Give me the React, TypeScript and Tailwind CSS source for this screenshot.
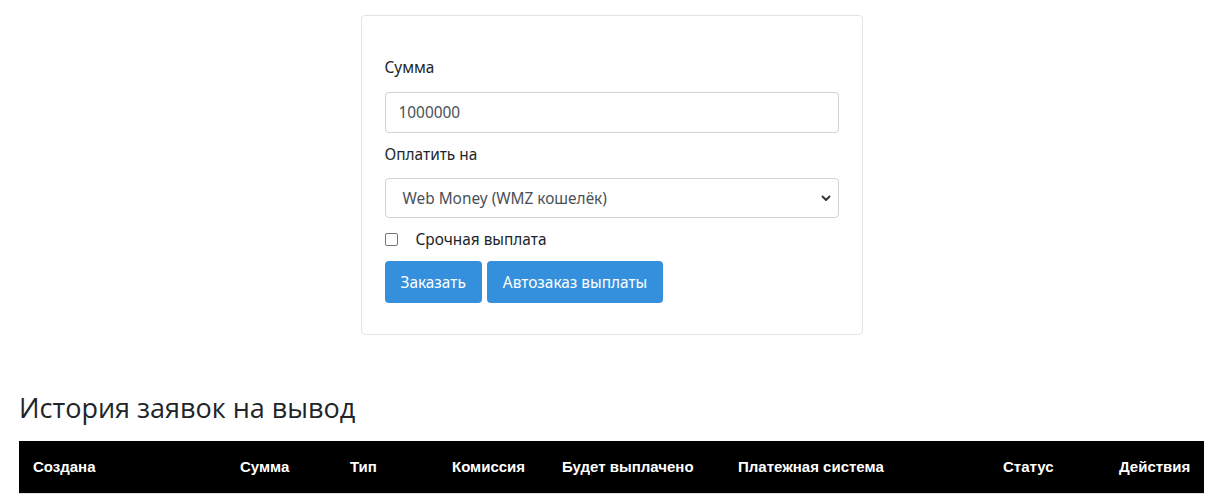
import React from "react";

const cols: { label: string; w: string }[] = [
  { label: "Создана", w: "w-[207px]" },
  { label: "Сумма", w: "w-[110px]" },
  { label: "Тип", w: "w-[102px]" },
  { label: "Комиссия", w: "w-[110px]" },
  { label: "Будет выплачено", w: "w-[176px]" },
  { label: "Платежная система", w: "w-[265px]" },
  { label: "Статус", w: "w-[116px]" },
  { label: "Действия", w: "w-[99px]" },
];

export default function App() {
  return (
    <div className="min-h-[498px] bg-white text-[#212529] font-['Noto_Sans',sans-serif] text-[15.4px] leading-[23px]">
      <div className="pl-[19px] pr-[9px] pt-[15px]">
        <div className="mx-auto w-[502px] rounded-[4px] border border-[#e2e3e5] px-[23px] pt-[40px] pb-[31px]">
          <label className="block">Сумма</label>
          <div className="mt-[13px] h-[41px] rounded-[4px] border border-[#ced4da] px-[13px] flex items-center text-[#495057]">
            1000000
          </div>
          <label className="block mt-[10px]">Оплатить на</label>
          <div className="relative mt-[12px] h-[40px] rounded-[4px] border border-[#ced4da] pl-[17px] flex items-center text-[#495057]">
            Web Money (WMZ кошелёк)
            <svg
              className="absolute right-[6px] top-1/2 -translate-y-1/2"
              width="12"
              height="12"
              viewBox="0 0 12 12"
            >
              <path d="M2.5 4.5 L6 8 L9.5 4.5" fill="none" stroke="#343a40" strokeWidth="2" strokeLinecap="round" strokeLinejoin="round" />
            </svg>
          </div>
          <div className="mt-[10px] flex items-center h-[23px]">
            <span className="w-[13px] h-[13px] rounded-[2px] border border-[#767676] bg-white" />
            <span className="ml-[18px]">Срочная выплата</span>
          </div>
          <div className="mt-[10px] flex gap-[5px]">
            <button className="h-[42px] rounded-[4px] bg-[#3490dc] px-[16px] text-white">Заказать</button>
            <button className="h-[42px] rounded-[4px] bg-[#3490dc] px-[16px] text-white">Автозаказ выплаты</button>
          </div>
        </div>

        <h2 className="mt-[56px] font-['Open_Sans',sans-serif] text-[27px] leading-[34px] font-normal text-[#212529]">
          История заявок на вывод
        </h2>

        <table className="mt-[16px] w-full table-fixed border-collapse">
          <thead>
            <tr className="bg-black text-white border-b border-[#dee2e6]">
              {cols.map((c) => (
                <th
                  key={c.label}
                  className={`${c.w} h-[52px] px-[14px] text-left align-middle font-['Liberation_Sans',sans-serif] font-bold text-[15px] whitespace-nowrap`}
                >
                  {c.label}
                </th>
              ))}
            </tr>
          </thead>
        </table>
      </div>
    </div>
  );
}
